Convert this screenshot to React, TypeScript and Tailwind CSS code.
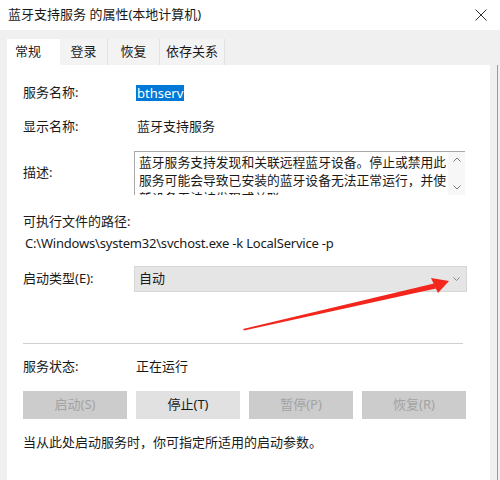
import React from 'react';

const font = { fontFamily: '"Noto Sans", "Noto Sans CJK SC", sans-serif' };

function Label({ children }: { children: React.ReactNode }) {
  return <div className="w-[113px] shrink-0">{children}</div>;
}

function Btn({ label, enabled }: { label: string; enabled?: boolean }) {
  return (
    <div
      className={
        'flex h-[28px] items-center justify-center ' +
        (enabled ? 'bg-[#e1e1e1] text-[#1a1a1a]' : 'bg-[#cccccc] text-[#a3a3a3]')
      }
    >
      {label}
    </div>
  );
}

export default function App() {
  return (
    <div
      className="relative flex h-[480px] w-[500px] flex-col overflow-hidden bg-[#f0f0f0] text-[13px] text-[#1a1a1a]"
      style={font}
    >
      {/* title bar */}
      <div className="flex h-[30px] shrink-0 items-center justify-between bg-white pl-[8px] pr-[13px]">
        <span>蓝牙支持服务 的属性(本地计算机)</span>
        <svg width="12" height="12" viewBox="0 0 12 12" className="text-[#333]">
          <path d="M0.5 0.5 L11.5 11.5 M11.5 0.5 L0.5 11.5" stroke="currentColor" strokeWidth="1" />
        </svg>
      </div>

      {/* tabs */}
      <div className="mt-[9px] flex h-[26px] shrink-0 pl-[7px]">
        <div className="flex w-[53px] items-center bg-white pl-[8px]">常规</div>
        <div className="flex w-[48px] items-center justify-center border-r border-[#e2e2e2] bg-[#f3f3f3]">登录</div>
        <div className="flex w-[52px] items-center justify-center border-r border-[#e2e2e2] bg-[#f3f3f3]">恢复</div>
        <div className="flex w-[65px] items-center justify-center border-r border-[#e2e2e2] bg-[#f3f3f3]">依存关系</div>
      </div>

      <div className="flex flex-1">
        <div className="ml-[7px] flex w-[483px] flex-col bg-white pl-[16px] pt-[17px]">
          <div className="flex h-[22px] items-center">
            <Label>服务名称:</Label>
            <span className="bg-[#0078d7] px-[1px] leading-[16px] text-white">bthserv</span>
          </div>
          <div className="mt-[12px] flex h-[22px] items-center">
            <Label>显示名称:</Label>
            <span className="pl-[1px]">蓝牙支持服务</span>
          </div>
          <div className="mt-[13px] flex">
            <div className="flex w-[111px] shrink-0 items-center">描述:</div>
            <div className="flex h-[44px] w-[331px] overflow-hidden border-l border-t border-[#a8a8a8]">
              <div className="flex-1 pl-[4px] pt-[1px] text-[12.8px] leading-[18px]">
                <div className="whitespace-nowrap">蓝牙服务支持发现和关联远程蓝牙设备。停止或禁用此</div>
                <div className="whitespace-nowrap">服务可能会导致已安装的蓝牙设备无法正常运行，并使</div>
                <div className="whitespace-nowrap">新设备无法被发现或关联。</div>
              </div>
              <div className="flex w-[17px] shrink-0 flex-col items-center justify-between bg-[#f7f7f7] py-[5px] text-[#777]">
                <svg width="8" height="5" viewBox="0 0 8 5">
                  <path d="M0.5 4.5 L4 1 L7.5 4.5" fill="none" stroke="currentColor" strokeWidth="1" />
                </svg>
                <svg width="8" height="5" viewBox="0 0 8 5">
                  <path d="M0.5 0.5 L4 4 L7.5 0.5" fill="none" stroke="currentColor" strokeWidth="1" />
                </svg>
              </div>
            </div>
          </div>
          <div className="mt-[18px] flex h-[18px] items-center">可执行文件的路径:</div>
          <div className="mt-[4px] flex h-[18px] items-center pl-[2px] tracking-[-0.2px]">
            C:\Windows\system32\svchost.exe -k LocalService -p
          </div>
          <div className="mt-[13px] flex">
            <div className="flex w-[111px] shrink-0 items-center">启动类型(E):</div>
            <div className="flex h-[26px] w-[333px] items-center justify-between border border-[#d6d6d6] bg-[#e5e5e5] pl-[4px] pr-[6px]">
              <span>自动</span>
              <svg width="7" height="4" viewBox="0 0 7 4" className="text-[#888]">
                <path d="M0.5 0.5 L3.5 3.5 L6.5 0.5" fill="none" stroke="currentColor" strokeWidth="1" />
              </svg>
            </div>
          </div>
          <div className="mt-[51px] h-[2px] w-[440px] border-t border-b border-t-[#cfcfcf] border-b-white" />
          <div className="mt-[13px] flex h-[18px] items-center">
            <Label>服务状态:</Label>
            <span>正在运行</span>
          </div>
          <div className="mt-[15px] grid w-[443px] grid-cols-4 gap-[9px]">
            <Btn label="启动(S)" />
            <Btn label="停止(T)" enabled />
            <Btn label="暂停(P)" />
            <Btn label="恢复(R)" />
          </div>
          <div className="mt-[15px] flex h-[18px] items-center">当从此处启动服务时，你可指定所适用的启动参数。</div>
        </div>
        <div className="ml-[7px] w-[1px] bg-[#9a9a9a]" />
      </div>

      {/* red annotation arrow */}
      <svg className="pointer-events-none absolute left-0 top-0" width="500" height="480" viewBox="0 0 500 480">
        <polygon points="243,329 434,283.5 436,288.5 244,330.5" fill="#f2261c" />
        <polygon points="449,281 431,278 438,293" fill="#f2261c" />
      </svg>
    </div>
  );
}
